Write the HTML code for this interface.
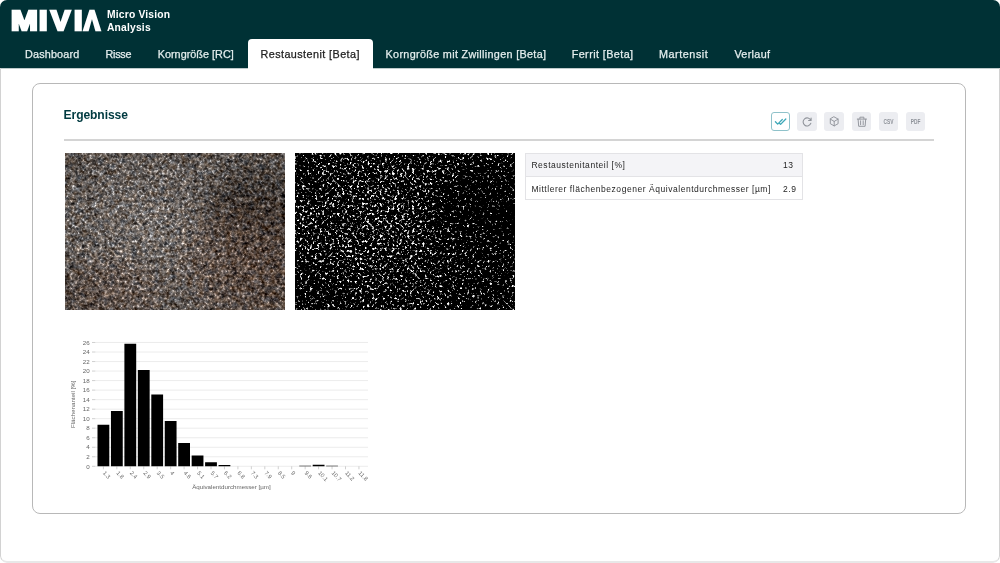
<!DOCTYPE html>
<html lang="de">
<head>
<meta charset="utf-8">
<title>MIVIA – Micro Vision Analysis</title>
<style>
*{box-sizing:border-box;margin:0;padding:0}
html,body{width:1000px;height:563px;overflow:hidden;background:#fff;font-family:"Liberation Sans",sans-serif;}
#frame{position:absolute;left:0;top:0;width:1000px;height:563px;border-radius:7px;overflow:hidden;background:#fff;will-change:transform}
#frame::after{content:"";box-sizing:border-box;position:absolute;left:0;top:68px;width:1000px;height:495px;border:1px solid #d2d2d2;border-top:none;border-bottom:2px solid #e8e8e8;border-radius:0 0 7px 7px;pointer-events:none}
#hdr{position:absolute;left:0;top:0;width:1000px;height:68px;background:#003135;box-shadow:0 1px 0 rgba(0,49,53,.25)}
#logo{position:absolute;left:0;top:0;font-weight:bold;font-size:26px;line-height:30px;color:#fff;white-space:nowrap}
#logo span{position:absolute;top:4px;transform-origin:0 0;-webkit-text-stroke:2.4px #fff}
#sub{position:absolute;left:107px;top:8px;color:#fff;font-weight:bold;font-size:10.3px;line-height:13px;white-space:nowrap;letter-spacing:.18px}
.tab{position:absolute;top:39px;height:29px;line-height:31px;font-size:10.8px;color:#e4eeee;white-space:nowrap;-webkit-text-stroke:.25px #e4eeee}
.tab.act{height:30px;background:#fff;color:#222;-webkit-text-stroke:.25px #222;border-radius:4px 4px 0 0;text-align:center}
#card{position:absolute;left:32px;top:83px;width:934px;height:431px;border:1px solid #b8b8b8;border-radius:8px;background:#fff}
h2{position:absolute;left:30.6px;top:23px;letter-spacing:-.1px;font-size:12.1px;line-height:16px;color:#003a40;font-weight:bold;white-space:nowrap}
#hr{position:absolute;left:30.6px;top:55px;width:870px;height:2px;background:#d4d4d4}
.btn{position:absolute;top:28.3px;width:19.2px;height:18.6px;border-radius:3px;background:#ecedf1}
.btn.first{background:#fff;border:1px solid #8fc2ca;width:19px}
.btn svg{position:absolute;left:0;top:0}
.btn.first svg{left:-1px;top:-1px}
.btn span{position:absolute;left:0;top:0;width:19.2px;text-align:center;font-size:5.9px;line-height:20.6px;font-weight:bold;color:#8d9198;transform:scale(.82,1.15)}
.img{position:absolute;top:69px;width:220px;height:157px;overflow:hidden}
table{position:absolute;left:491.6px;top:69px;width:278px;border-collapse:collapse;font-size:8.5px;color:#1e1e1e;letter-spacing:.54px}
td{border:1px solid #e3e3e6;height:23.2px;padding:.5px 0 0 5.8px;white-space:nowrap}
td.v{border-left:none;text-align:left;padding:.5px 0 0 6px;width:25px}
td.k{border-right:none}
tr.a td{background:#f4f4f7}
#chart{position:absolute;left:31px;top:248px}
</style>
</head>
<body>
<svg width="0" height="0" style="position:absolute"><defs>
<filter id="mic" x="0" y="0" width="100%" height="100%" color-interpolation-filters="sRGB">
  <feTurbulence type="fractalNoise" baseFrequency=".4" numOctaves="2" seed="7"/>
  <feColorMatrix type="matrix" values="1 0 0 0 0  1 0 0 0 0  1 0 0 0 0  0 0 0 0 1" result="n"/>
  <feComposite in="n" in2="SourceGraphic" operator="arithmetic" k1="0" k2="1.667" k3="0.5" k4="-0.5830" result="c"/>
  <feComponentTransfer in="c" result="L">
    <feFuncR type="table" tableValues=".17 .2 .24 .29 .35 .41 .5 .63 .8"/>
    <feFuncG type="table" tableValues=".17 .2 .24 .29 .35 .41 .5 .63 .8"/>
    <feFuncB type="table" tableValues=".17 .2 .24 .29 .35 .41 .5 .63 .8"/>
    <feFuncA type="linear" slope="0" intercept="1"/>
  </feComponentTransfer>
  <feTurbulence type="fractalNoise" baseFrequency=".18" numOctaves="2" seed="11" result="m"/>
  <feColorMatrix in="m" type="matrix" values=".15 .5 0 0 .195  .04 .5 0 0 .225  -.07 .5 0 0 .265  0 0 0 0 1" result="T"/>
  <feComposite in="L" in2="T" operator="arithmetic" k1="0" k2="1" k3="1" k4="-.5" result="LT"/>
  <feComposite in="LT" in2="SourceGraphic" operator="arithmetic" k1="0" k2="1" k3="0.2" k4="-0.1000"/>
</filter>
<filter id="seg" x="0" y="0" width="100%" height="100%" color-interpolation-filters="sRGB">
  <feTurbulence type="fractalNoise" baseFrequency=".4" numOctaves="2" seed="7"/>
  <feColorMatrix type="matrix" values="1 0 0 0 0  1 0 0 0 0  1 0 0 0 0  0 0 0 0 1" result="n"/>
  <feComposite in="n" in2="SourceGraphic" operator="arithmetic" k1="0" k2="1" k3="0.22" k4="-0.1100"/>
  <feColorMatrix type="matrix" values="0 6 0 0 -3.42  0 6 0 0 -3.42  0 6 0 0 -3.42  0 0 0 0 1"/>
</filter>
<radialGradient id="gd"><stop offset="0" stop-color="#000" stop-opacity=".55"/><stop offset=".5" stop-color="#000" stop-opacity=".36"/><stop offset="1" stop-color="#000" stop-opacity="0"/></radialGradient>
<radialGradient id="gl"><stop offset="0" stop-color="#fff" stop-opacity=".35"/><stop offset="1" stop-color="#fff" stop-opacity="0"/></radialGradient>
<radialGradient id="gb"><stop offset="0" stop-color="#96644a" stop-opacity=".42"/><stop offset=".6" stop-color="#96644a" stop-opacity=".24"/><stop offset="1" stop-color="#96644a" stop-opacity="0"/></radialGradient>
<g id="shade"><rect width="220" height="157" fill="#808080"/><ellipse cx="182" cy="55" rx="62" ry="48" fill="url(#gd)"/><ellipse cx="220" cy="85" rx="95" ry="120" fill="url(#gd)" opacity=".85"/><ellipse cx="0" cy="157" rx="55" ry="50" fill="url(#gd)" opacity=".5"/><ellipse cx="0" cy="0" rx="40" ry="40" fill="url(#gd)" opacity=".35"/><ellipse cx="85" cy="72" rx="95" ry="75" fill="url(#gl)"/><ellipse cx="185" cy="110" rx="85" ry="75" fill="url(#gb)"/><ellipse cx="45" cy="140" rx="70" ry="45" fill="url(#gb)" opacity=".7"/></g>
</defs></svg>
<div id="frame">
<div id="hdr">
  <div id="logo"><span style="left:11.2px;transform:scale(1.235,1.07)">M</span><span style="left:39.4px;transform:scale(1.167,1.07)">I</span><span style="left:51.1px;transform:scale(1.1,1.07)">V</span><span style="left:73.5px;transform:scale(1.167,1.07)">I</span><span style="left:83.6px;transform:scale(.92,1.07)">Λ</span></div>
  <div id="sub">Micro Vision<br>Analysis</div>
  <div class="tab" style="left:25px;letter-spacing:0.171px">Dashboard</div>
  <div class="tab" style="left:105.5px;letter-spacing:-0.275px">Risse</div>
  <div class="tab" style="left:157.7px;letter-spacing:0.038px">Korngröße [RC]</div>
  <div class="tab act" style="left:247.5px;width:125px;letter-spacing:.431px;text-indent:.4px">Restaustenit [Beta]</div>
  <div class="tab" style="left:385.6px;letter-spacing:0.326px">Korngröße mit Zwillingen [Beta]</div>
  <div class="tab" style="left:571.7px;letter-spacing:0.416px">Ferrit [Beta]</div>
  <div class="tab" style="left:659px;letter-spacing:0.549px">Martensit</div>
  <div class="tab" style="left:734.4px;letter-spacing:0.329px">Verlauf</div>
</div>
<div id="card">
  <h2>Ergebnisse</h2>
  <div id="hr"></div>
  <div class="btn first" style="left:738px"><svg width="19" height="19" viewBox="0 0 19 19"><path d="M4.4 9.7l2.3 2.4 4.6-4.6M8.4 11.2l1.2 1.2 5.2-5.4" stroke="#3fa9b9" stroke-width="1.3" fill="none" stroke-linecap="round" stroke-linejoin="round"/></svg></div>
  <div class="btn" style="left:764.4px"><svg width="19" height="19" viewBox="0 0 19 19"><path d="M13.8 8.4A4 4 0 1 0 13.9 11.2M14.1 6v2.5h-2.5" stroke="#90949b" stroke-width="1.1" fill="none" stroke-linecap="round" stroke-linejoin="round"/></svg></div>
  <div class="btn" style="left:791.4px"><svg width="19" height="19" viewBox="0 0 19 19"><path d="M10.2 4.9l3.9 2.2v4.6l-3.9 2.2-3.9-2.2V7.1zM6.3 7.1l3.9 2.3 3.9-2.3M10.2 9.4v4.5" stroke="#90949b" stroke-width=".95" fill="none" stroke-linecap="round" stroke-linejoin="round"/></svg></div>
  <div class="btn" style="left:818.5px"><svg width="19" height="19" viewBox="0 0 19 19"><path d="M5.3 7.1h9.2M7.9 7V5.2h4V7M6.1 7.2l.6 7.1h6.4l.6-7.1M8.6 8.8v3.9M11.2 8.8v3.9" stroke="#90949b" stroke-width=".95" fill="none" stroke-linecap="round" stroke-linejoin="round"/></svg></div>
  <div class="btn" style="left:845.6px"><span>CSV</span></div>
  <div class="btn" style="left:873.2px"><span>PDF</span></div>
  <div class="img" style="left:32px"><svg width="220" height="157"><use href="#shade" filter="url(#mic)"/></svg></div>
  <div class="img" style="left:262px"><svg width="220" height="157"><use href="#shade" filter="url(#seg)"/></svg></div>
  <table>
    <tr class="a"><td class="k">Restaustenitanteil [%]</td><td class="v">13</td></tr>
    <tr><td class="k">Mittlerer flächenbezogener Äquivalentdurchmesser [µm]</td><td class="v">2.9</td></tr>
  </table>
<svg id="chart" width="320" height="170" viewBox="64 332 320 170" font-family="Liberation Sans, sans-serif" font-size="6.2" fill="#666">
<path d="M95.3 466.30H368M95.3 456.78H368M95.3 447.25H368M95.3 437.73H368M95.3 428.20H368M95.3 418.68H368M95.3 409.16H368M95.3 399.63H368M95.3 390.11H368M95.3 380.58H368M95.3 371.06H368M95.3 361.54H368M95.3 352.01H368M95.3 342.49H368" stroke="#e7e7e7" stroke-width=".8" fill="none"/>
<path d="M92 466.30h3.3M92 456.78h3.3M92 447.25h3.3M92 437.73h3.3M92 428.20h3.3M92 418.68h3.3M92 409.16h3.3M92 399.63h3.3M92 390.11h3.3M92 380.58h3.3M92 371.06h3.3M92 361.54h3.3M92 352.01h3.3M92 342.49h3.3M103.40 466.3v3M116.85 466.3v3M130.30 466.3v3M143.75 466.3v3M157.20 466.3v3M170.65 466.3v3M184.10 466.3v3M197.55 466.3v3M211.00 466.3v3M224.45 466.3v3M237.90 466.3v3M251.35 466.3v3M264.80 466.3v3M278.25 466.3v3M291.70 466.3v3M305.15 466.3v3M318.60 466.3v3M332.05 466.3v3M345.50 466.3v3M358.95 466.3v3" stroke="#c4c4c4" stroke-width=".8" fill="none"/>
<path d="M97.50 466.3v-41.62h11.8v41.62zM110.95 466.3v-55.24h11.8v55.24zM124.40 466.3v-122.62h11.8v122.62zM137.85 466.3v-96.19h11.8v96.19zM151.30 466.3v-71.91h11.8v71.91zM164.75 466.3v-45.24h11.8v45.24zM178.20 466.3v-23.33h11.8v23.33zM191.65 466.3v-10.71h11.8v10.71zM205.10 466.3v-4.10h11.8v4.10zM218.55 466.3v-1.29h11.8v1.29zM232.00 466.3v-0.14h11.8v0.14zM299.25 466.3v-0.48h11.8v0.48zM312.70 466.3v-1.43h11.8v1.43zM326.15 466.3v-0.48h11.8v0.48z" fill="#000"/>
<g text-anchor="end">
<text x="89.6" y="468.50">0</text>
<text x="89.6" y="458.98">2</text>
<text x="89.6" y="449.45">4</text>
<text x="89.6" y="439.93">6</text>
<text x="89.6" y="430.40">8</text>
<text x="89.6" y="420.88">10</text>
<text x="89.6" y="411.36">12</text>
<text x="89.6" y="401.83">14</text>
<text x="89.6" y="392.31">16</text>
<text x="89.6" y="382.78">18</text>
<text x="89.6" y="373.26">20</text>
<text x="89.6" y="363.74">22</text>
<text x="89.6" y="354.21">24</text>
<text x="89.6" y="344.69">26</text>
</g>
<text font-size="5.8" transform="translate(104.10 471.8) rotate(47)" y="2.1">1.3</text>
<text font-size="5.8" transform="translate(117.55 471.8) rotate(47)" y="2.1">1.8</text>
<text font-size="5.8" transform="translate(131.00 471.8) rotate(47)" y="2.1">2.4</text>
<text font-size="5.8" transform="translate(144.45 471.8) rotate(47)" y="2.1">2.9</text>
<text font-size="5.8" transform="translate(157.90 471.8) rotate(47)" y="2.1">3.5</text>
<text font-size="5.8" transform="translate(171.35 471.8) rotate(47)" y="2.1">4</text>
<text font-size="5.8" transform="translate(184.80 471.8) rotate(47)" y="2.1">4.6</text>
<text font-size="5.8" transform="translate(198.25 471.8) rotate(47)" y="2.1">5.1</text>
<text font-size="5.8" transform="translate(211.70 471.8) rotate(47)" y="2.1">5.7</text>
<text font-size="5.8" transform="translate(225.15 471.8) rotate(47)" y="2.1">6.2</text>
<text font-size="5.8" transform="translate(238.60 471.8) rotate(47)" y="2.1">6.8</text>
<text font-size="5.8" transform="translate(252.05 471.8) rotate(47)" y="2.1">7.3</text>
<text font-size="5.8" transform="translate(265.50 471.8) rotate(47)" y="2.1">7.9</text>
<text font-size="5.8" transform="translate(278.95 471.8) rotate(47)" y="2.1">8.5</text>
<text font-size="5.8" transform="translate(292.40 471.8) rotate(47)" y="2.1">9</text>
<text font-size="5.8" transform="translate(305.85 471.8) rotate(47)" y="2.1">9.6</text>
<text font-size="5.8" transform="translate(319.30 471.8) rotate(47)" y="2.1">10.1</text>
<text font-size="5.8" transform="translate(332.75 471.8) rotate(47)" y="2.1">10.7</text>
<text font-size="5.8" transform="translate(346.20 471.8) rotate(47)" y="2.1">11.2</text>
<text font-size="5.8" transform="translate(359.65 471.8) rotate(47)" y="2.1">11.8</text>
<text x="231.4" y="489.2" text-anchor="middle">Äquivalentdurchmesser [µm]</text>
<text transform="translate(75.2 404.3) rotate(-90)" text-anchor="middle">Flächenanteil [%]</text>
</svg>
</div>
</div>
</body>
</html>
